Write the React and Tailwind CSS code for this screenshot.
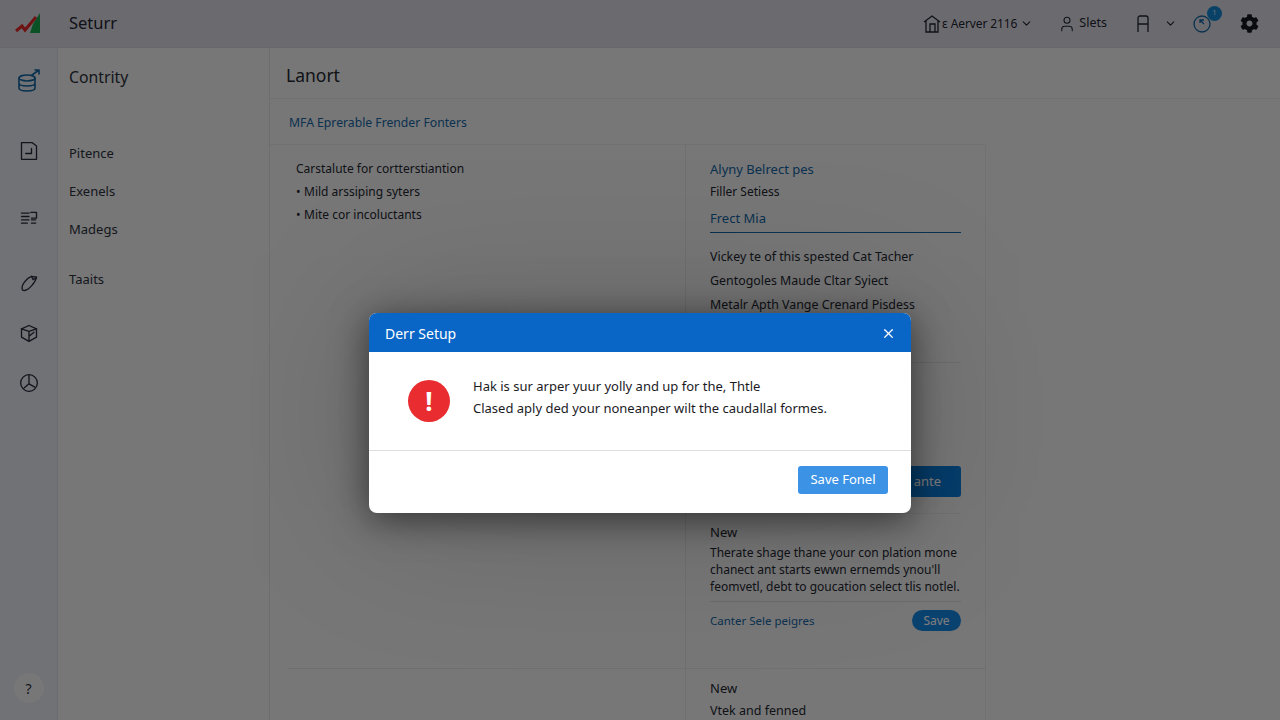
import { ChevronDown, User, X } from "lucide-react";
import { FaCog } from "react-icons/fa";

function Logo() {
  return (
    <svg width="28" height="24" viewBox="0 0 28 24">
      <path d="M26 1V21H16L19 12Z" fill="#16a34a" />
      <path d="M2 19L8 14L11 18L22 5" fill="none" stroke="#dc2626" strokeWidth="3" />
    </svg>
  );
}

function RailIcon({ size = 20, children }) {
  return (
    <svg width={size} height={size} viewBox="0 0 24 24" fill="none" stroke="currentColor" strokeWidth="1.6" strokeLinecap="round" strokeLinejoin="round">
      {children}
    </svg>
  );
}

function Rail() {
  return (
    <aside className="w-[58px] shrink-0 flex flex-col items-center bg-[#e2e4ea] border-r border-[#d4d6de] text-[#232a3a]">
      <div className="mt-[21px] text-[#14639e]">
        <RailIcon size={24}>
          <ellipse cx="10" cy="9" rx="8" ry="3" />
          <path d="M2 9V19C2 21 6 22 10 22C14 22 18 21 18 19V9M2 14C2 16 6 17 10 17C14 17 18 16 18 14" />
          <path d="M15 6L22 1M18 1H22V5" />
        </RailIcon>
      </div>
      <div className="mt-[48px]">
        <RailIcon>
          <path d="M3 2H16L21 6V22H3Z" />
          <path d="M8 15H15V9" />
        </RailIcon>
      </div>
      <div className="mt-[48px]">
        <RailIcon>
          <path d="M3 5H12M3 9H12M3 13H12M3 17H10M15 17H20M14 4H21V11H15M15 13H20" />
        </RailIcon>
      </div>
      <div className="mt-[44px]">
        <RailIcon>
          <path d="M4 20C2 15 9 6 15 4L21 5C20 11 12 20 7 21C6 21 5 21 4 20Z" />
          <path d="M15 4L17 8L21 5" />
        </RailIcon>
      </div>
      <div className="mt-[30px]">
        <RailIcon>
          <path d="M3 7L12 3L21 7V17L12 22L3 17Z" />
          <path d="M3 7L12 10L21 7M12 10V22M12 16L18 11" />
        </RailIcon>
      </div>
      <div className="mt-[30px]">
        <RailIcon>
          <circle cx="12" cy="12" r="10" />
          <path d="M12 3V13M12 13L19 17M12 13L6 18" />
        </RailIcon>
      </div>
      <div className="mt-auto mb-[17px] w-[30px] h-[30px] rounded-full bg-[#eeeef0] flex items-center justify-center text-[14px] text-[#232a3a]">
        ?
      </div>
    </aside>
  );
}

function SideNav() {
  return (
    <nav className="w-[212px] shrink-0 border-r border-[#dcdce2] pl-[11px] text-[13px] text-[#2a2e3a]">
      <div className="mt-[19px] text-[15.8px] leading-5">Contrity</div>
      <div className="mt-[56px] leading-5">Pitence</div>
      <div className="mt-[18px] leading-5">Exenels</div>
      <div className="mt-[18px] leading-5">Madegs</div>
      <div className="mt-[30px] leading-5">Taaits</div>
    </nav>
  );
}

function TopBar() {
  return (
    <header className="h-12 shrink-0 flex items-center bg-[#d6d7df] border-b border-[#cdcfd8] text-[#1f2430]">
      <div className="w-[69px] pl-[14px] shrink-0">
        <Logo />
      </div>
      <div className="text-[16.5px]">Seturr</div>
      <div className="ml-auto flex items-center text-[12px]">
        <svg width="18" height="18" viewBox="0 0 18 18" fill="none" stroke="currentColor" strokeWidth="1.3">
          <path d="M1 7L9 1L17 7M3 6V17H15V6M7 17V9H12V17" />
        </svg>
        <span className="ml-[1px] tracking-[-0.1px]">ɛ Aerver 2116</span>
        <ChevronDown size={13} className="ml-[3px]" />
        <User size={18} strokeWidth={1.4} className="ml-[25px]" />
        <span className="ml-[3px] text-[12.5px]">Slets</span>
        <svg width="14" height="18" viewBox="0 0 14 18" fill="none" stroke="currentColor" strokeWidth="1.3" className="ml-[29px]">
          <path d="M2 17V3C2 2 3 1 4 1H10C11 1 12 2 12 3V17M2 9H12" />
        </svg>
        <ChevronDown size={13} className="ml-[14px]" />
        <div className="relative ml-[16px]">
          <svg width="18" height="18" viewBox="0 0 18 18" fill="none" stroke="#14639e" strokeWidth="1.3">
            <circle cx="9" cy="9" r="8" />
            <path d="M11 5H7V8M7 5L11 9" />
          </svg>
          <span className="absolute -top-[9px] -right-[11px] w-[15px] h-[15px] rounded-full bg-[#1584cf] text-[7px] text-[#cfe6f7] flex items-center justify-center">
            1
          </span>
        </div>
        <FaCog size={19} className="ml-[29px] mr-[21px] text-[#14171f]" />
      </div>
    </header>
  );
}

function LeftPanel() {
  return (
    <div className="border-r border-[#dfdfe4] pl-2 pt-3 text-[12px] leading-[23px] text-[#23262e]">
      <div>Carstalute for cortterstiantion</div>
      <div className="flex"><span className="w-2">•</span>Mild arssiping syters</div>
      <div className="flex"><span className="w-2">•</span>Mite cor incoluctants</div>
    </div>
  );
}

function RightPanel() {
  return (
    <div className="pl-6 pr-[25px] text-[13px] text-[#23262e]">
      <div className="pt-[13px] leading-[22px] text-[#14639e]">Alyny Belrect pes</div>
      <div className="mt-[1px] leading-[22px] text-[12px]">Filler Setiess</div>
      <div className="mt-[4px] h-[26px] leading-[22px] text-[#14639e] border-b border-[#14639e]">Frect Mia</div>
      <div className="mt-[12px] text-[12.4px] leading-[24px]">
        <div>Vickey te of this spested Cat Tacher</div>
        <div>Gentogoles Maude Cltar Syiect</div>
        <div>Metalr Apth Vange Crenard Pisdess</div>
      </div>
      <div className="mt-[45px] border-t border-[#dcdce2] h-[135px] flex items-end justify-end">
        <div className="w-[110px] h-[31px] bg-[#0b7ad6] rounded-[3px] text-right pr-5 leading-[31px] text-white">ante</div>
      </div>
      <div className="mt-[16px] border-t border-[#e2e2e6] pt-2 leading-5">New</div>
      <div className="mt-[2px] text-[12px] leading-[17px] whitespace-nowrap">
        <div>Therate shage thane your con plation mone</div>
        <div>chanect ant starts ewwn ernemds ynou'll</div>
        <div>feomvetl, debt to goucation select tlis notlel.</div>
      </div>
      <div className="mt-[6px] border-t border-[#d6d6dc] pt-2 flex items-center justify-between">
        <span className="text-[#14639e] text-[11.5px]">Canter Sele peigres</span>
        <span className="w-[49px] h-[21px] rounded-full bg-[#1584e0] text-white text-[12px] leading-[21px] text-center">Save</span>
      </div>
    </div>
  );
}

function Modal() {
  return (
    <div className="absolute inset-0 bg-black/50 flex justify-center items-start pt-[313px]">
      <div className="w-[542px] h-[200px] rounded-[8px] bg-white shadow-[0_6px_36px_rgba(0,0,0,0.55),0_0_160px_rgba(0,0,0,0.18)] overflow-hidden flex flex-col">
        <div className="h-[39px] shrink-0 bg-[#0a66c6] flex items-center justify-between pl-4 pr-[15px] text-white">
          <span className="text-[14px] mt-[1px]">Derr Setup</span>
          <X size={15} strokeWidth={2} className="mt-[1px]" />
        </div>
        <div className="h-[99px] shrink-0 border-b border-[#dedee2] flex pl-[39px] pt-[28px]">
          <div className="w-[42px] h-[42px] rounded-full bg-[#e82c30] flex items-center justify-center text-white text-[26px] font-bold">!</div>
          <div className="ml-[23px] text-[13px] leading-[22px] text-[#1b1b1f] -mt-[5px]">
            <div>Hak is sur arper yuur yolly and up for the, Thtle</div>
            <div>Clased aply ded your noneanper wilt the caudallal formes.</div>
          </div>
        </div>
        <div className="flex justify-end pt-[15px] pr-[23px]">
          <button className="w-[90px] h-7 rounded-[3px] bg-[#3c93e6] text-white text-[13px]">Save Fonel</button>
        </div>
      </div>
    </div>
  );
}

export default function App() {
  return (
    <div className="relative w-[1280px] h-[720px] overflow-hidden flex flex-col bg-[#eeeef0] font-['Noto_Sans',sans-serif]">
      <TopBar />
      <div className="flex-1 flex min-h-0">
        <Rail />
        <SideNav />
        <main className="flex-1 min-w-0">
          <div className="h-[51px] border-b border-[#e2e2e6] pl-4 pt-[15px] text-[17.5px] leading-6 text-[#23262e]">Lanort</div>
          <div className="w-[716px] pl-[18px]">
            <div className="h-[46px] -ml-[18px] border-b border-[#e2e2e6] pl-[19px] leading-[47px] text-[12.2px] text-[#14639e]">MFA Eprerable Frender Fonters</div>
            <div className="grid grid-cols-[398px_300px] grid-rows-[523px_52px] border-r border-[#e2e2e6]">
              <LeftPanel />
              <RightPanel />
              <div className="border-r border-t border-[#dfdfe4]" />
              <div className="border-t border-[#dfdfe4] pl-6 pt-[9px] text-[12.5px] leading-5 text-[#23262e]">
                <div className="text-[13px]">New</div>
                <div className="mt-[3px]">Vtek and fenned</div>
              </div>
            </div>
          </div>
        </main>
      </div>
      <Modal />
    </div>
  );
}
